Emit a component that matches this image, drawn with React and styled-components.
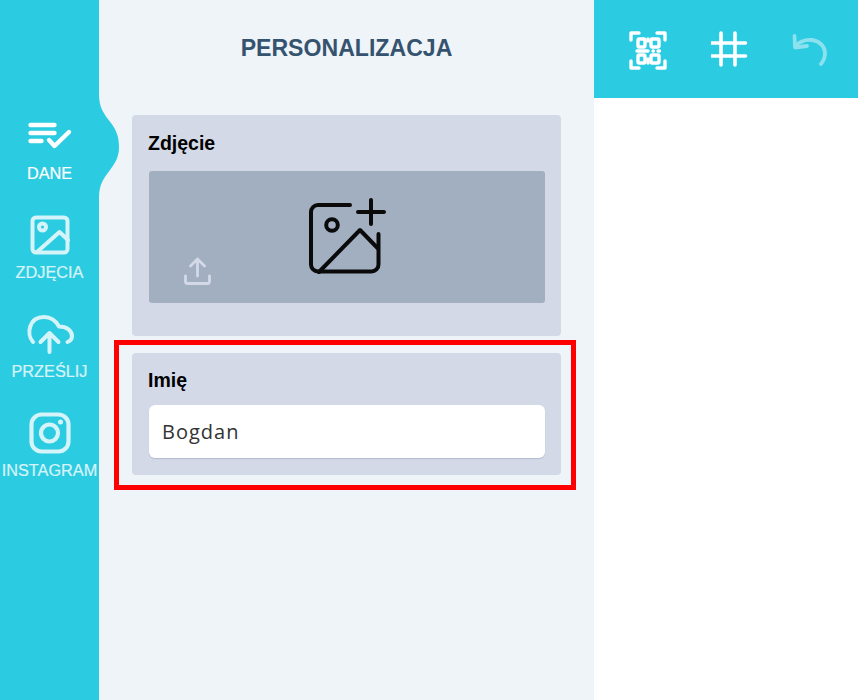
import React from "react";
import styled, { createGlobalStyle } from "styled-components";

const Global = createGlobalStyle`
  html, body { margin: 0; padding: 0; background: #fff; }
  body { font-family: "Liberation Sans", Arial, sans-serif; }
  * { box-sizing: border-box; }
`;

const Page = styled.div`
  display: flex;
  width: 858px;
  height: 700px;
  overflow: hidden;
`;

const Sidebar = styled.nav`
  position: relative;
  width: 99px;
  flex: none;
  background: #2bcbe1;
  padding-top: 114px;
  display: flex;
  flex-direction: column;
  z-index: 1;
`;

const Bump = styled.svg`
  position: absolute;
  left: 99px;
  top: 94px;
`;

const NavItem = styled.div`
  height: 99px;
  display: flex;
  flex-direction: column;
  align-items: center;
  color: #fff;
  opacity: ${(p) => (p.$active ? 1 : 0.8)};
`;

const NavIcon = styled.div`
  height: 44px;
  width: 99px;
  display: flex;
  align-items: center;
  justify-content: center;
`;

const NavLabel = styled.span`
  font-size: 16.3px;
  line-height: 18px;
  margin-top: 6px;
  white-space: nowrap;
  -webkit-text-stroke: 0.2px currentColor;
`;

const Panel = styled.main`
  width: 495px;
  flex: none;
  background: #eff4f9;
  display: flex;
  flex-direction: column;
  padding: 0 33px;
`;

const Title = styled.h1`
  margin: 0;
  height: 115px;
  padding-top: 35px;
  font-size: 23.1px;
  line-height: 26px;
  font-weight: 700;
  color: #35536e;
  text-align: center;
`;

const Card = styled.section`
  position: relative;
  background: #d3d9e7;
  border-radius: 4px;
  padding: ${(p) => p.$top}px 16px 0 17px;
  height: ${(p) => p.$h}px;
  margin-bottom: 17px;
  width: 429px;
`;

const CardLabel = styled.div`
  font-size: 19.5px;
  line-height: 28px;
  font-weight: 700;
  color: #000;
  margin-left: -1px;
`;

const Highlight = styled.div`
  position: absolute;
  left: -18px;
  top: -13px;
  right: -15px;
  bottom: -15px;
  border: 5px solid #ff0000;
  pointer-events: none;
`;

const Dropzone = styled.div`
  position: relative;
  margin-top: 14px;
  height: 132px;
  background: #a2afc1;
  border-radius: 3px;
  display: flex;
  justify-content: center;
  align-items: center;
`;

const UploadIcon = styled.svg`
  position: absolute;
  left: 34px;
  bottom: 16px;
`;

const NameInput = styled.input`
  display: block;
  width: 100%;
  height: 53px;
  margin-top: 11px;
  padding: 0 13px;
  border: none;
  border-radius: 6px;
  background: #fff;
  box-shadow: 0 1px 1px rgba(120, 135, 165, 0.35);
  font-family: "Open Sans", sans-serif;
  font-size: 20px;
  letter-spacing: 1px;
  color: #333;
  outline: none;
`;

const Right = styled.aside`
  flex: 1;
  display: flex;
  flex-direction: column;
  background: #fff;
`;

const Toolbar = styled.div`
  height: 98px;
  background: #2bcbe1;
  display: flex;
  align-items: flex-start;
  padding: 30px 0 0 34px;
  gap: 42px;
`;

const ToolSlot = styled.div`
  width: 40px;
  height: 40px;
  display: flex;
  align-items: center;
  justify-content: center;
  opacity: ${(p) => (p.$dim ? 0.45 : 1)};
`;

const s = { fill: "none", stroke: "currentColor", strokeLinecap: "round", strokeLinejoin: "round" };

const ChecklistIcon = () => (
  <svg width="46" height="32" viewBox="0 0 46 32" {...s} strokeWidth="4.4">
    <path d="M3.5 5h24M3.5 13h24M3.5 21h11" />
    <path d="M22 20l5.5 6L42 12" />
  </svg>
);
const PictureIcon = () => (
  <svg width="40" height="40" viewBox="0 0 40 40" {...s} strokeWidth="4">
    <rect x="2.5" y="2.5" width="35" height="35" rx="3.5" />
    <circle cx="12.5" cy="12" r="3.5" />
    <path d="M7 37L29.5 17l8.500 8" />
  </svg>
);
const CloudIcon = () => (
  <svg width="48" height="40" viewBox="0 0 48 40" {...s} strokeWidth="4">
    <path d="M7 28C0 20 3 3 18 3c7 0 12 4 15 9.5 8 0 13 4.500 13 9.500 0 3-2 5-4.500 6" />
    <path d="M23.5 38V19M14.500 28l9-9 9 9" />
  </svg>
);
const InstaIcon = () => (
  <svg width="42" height="42" viewBox="0 0 42 42" {...s} strokeWidth="4.2">
    <rect x="2.5" y="2.5" width="37" height="37" rx="10" />
    <circle cx="20.5" cy="21" r="8.5" />
    <circle cx="31.5" cy="10" r="2.5" fill="currentColor" stroke="none" />
  </svg>
);
const AddImageIcon = () => (
  <svg width="80" height="80" viewBox="0 0 80 80" {...s} stroke="#0a0a0a" strokeWidth="4">
    <path d="M43 8H11a7 7 0 0 0-7 7v52.500a7 7 0 0 0 7 7h53.500a7 7 0 0 0 7-7V37" />
    <circle cx="25" cy="28" r="5.8" />
    <path d="M12 75L53 33l17.500 18M64 3v24M51 15h26" />
  </svg>
);
const QrIcon = () => (
  <svg width="40" height="40" viewBox="0 0 40 40" {...s} stroke="#fff" strokeWidth="3.4">
    <path d="M3 10V3h8M29 3h8v7M3 31v7h8M37 31v7h-8" />
    <rect x="10" y="9" width="7" height="8" rx="1.2" />
    <rect x="23" y="9" width="8" height="8" rx="1.2" />
    <rect x="10" y="25" width="7" height="8" rx="1.2" />
    <rect x="23" y="25" width="8" height="8" rx="1.2" />
    <path d="M9 21h11M25 21h0.500M30 21h1.500M20 9v2M20 29v4" />
  </svg>
);
const HashIcon = () => (
  <svg width="38" height="38" viewBox="0 0 38 38" {...s} stroke="#fff" strokeWidth="3.6">
    <path d="M10 2v32M24 2v32M0.500 12h34M0.500 25h34" />
  </svg>
);
const UndoIcon = () => (
  <svg width="40" height="40" viewBox="0 0 40 40" {...s} stroke="#fff" strokeWidth="3.8">
    <path d="M2.500 6L3 17.500 15 16" />
    <path d="M3.500 16C9 10 15 9.500 20 10c8 1 13 7 13 13 0 4-1.500 8-4 11" />
  </svg>
);
const UploadSvg = () => (
  <UploadIcon width="30" height="30" viewBox="0 0 30 30" {...s} stroke="#d3d9e7" strokeWidth="2.8">
    <path d="M14.500 19V2M7.500 9l7-7 7 7M2.500 19v5.500a2 2 0 0 0 2 2h20a2 2 0 0 0 2-2V19" />
  </UploadIcon>
);

const nav = [
  { label: "DANE", icon: <ChecklistIcon />, active: true },
  { label: "ZDJĘCIA", icon: <PictureIcon /> },
  { label: "PRZEŚLIJ", icon: <CloudIcon /> },
  { label: "INSTAGRAM", icon: <InstaIcon /> },
];

export default function App() {
  return (
    <Page>
      <Global />
      <Sidebar>
        <Bump width="21" height="104" viewBox="0 0 21 104">
          <path
            d="M0 0C0 14 5 20 12 29C18 37 20 44 20 53C20 62 17 68 11 76C5 84 0 90 0 104Z"
            fill="#2bcbe1"
          />
        </Bump>
        {nav.map((n) => (
          <NavItem key={n.label} $active={n.active}>
            <NavIcon>{n.icon}</NavIcon>
            <NavLabel>{n.label}</NavLabel>
          </NavItem>
        ))}
      </Sidebar>
      <Panel>
        <Title>PERSONALIZACJA</Title>
        <Card $h={221} $top={14}>
          <CardLabel>Zdjęcie</CardLabel>
          <Dropzone>
            <AddImageIcon />
            <UploadSvg />
          </Dropzone>
        </Card>
        <Card $h={122} $top={13}>
          <CardLabel>Imię</CardLabel>
          <NameInput defaultValue="Bogdan" />
          <Highlight />
        </Card>
      </Panel>
      <Right>
        <Toolbar>
          <ToolSlot><QrIcon /></ToolSlot>
          <ToolSlot><HashIcon /></ToolSlot>
          <ToolSlot $dim><UndoIcon /></ToolSlot>
        </Toolbar>
      </Right>
    </Page>
  );
}
